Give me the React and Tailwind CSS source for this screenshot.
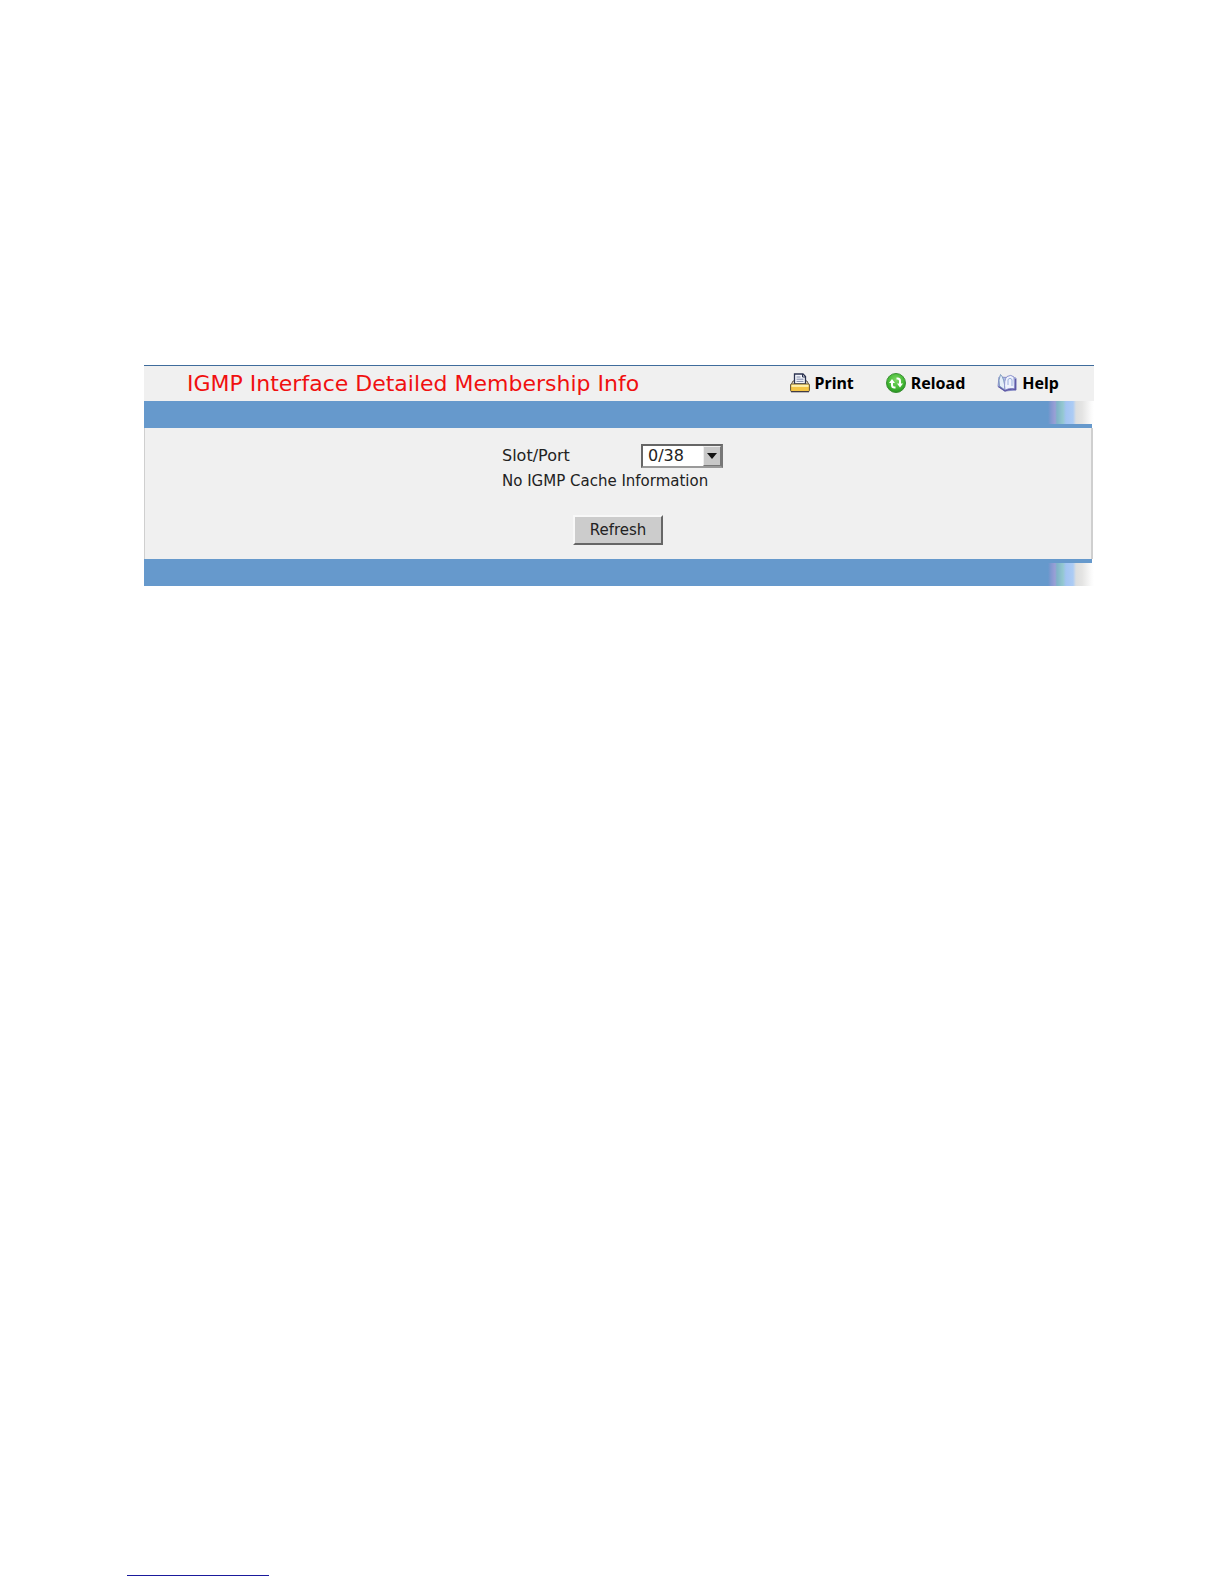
import React from "react";

function PrintIcon() {
  return (
    <svg width="20" height="20" viewBox="0 0 20 20" aria-hidden="true">
      <path d="M3 8L1 12h18l-2-4z" fill="#fff3d4" stroke="#5e5345" />
      <path d="M4.500 1h8.500l2.500 2.500V11h-11z" fill="#f4f6fc" stroke="#2b3350" strokeWidth="1.300" />
      <path d="M12.500 1v3h3" fill="none" stroke="#2b3350" />
      <path d="M6.500 4h4M6.500 6.200h7M6.500 8.400h7" stroke="#7f89a8" />
      <rect x="0.600" y="11" width="18.800" height="7.500" rx="1" fill="#f4c545" stroke="#5e5037" />
      <path d="M1.500 12.800h17" stroke="#fff1ad" strokeWidth="2.200" />
      <path d="M1 18.700h18" stroke="#3f3a48" strokeWidth="1.200" />
    </svg>
  );
}

function ReloadIcon() {
  return (
    <svg width="20" height="20" viewBox="0 0 20 20" aria-hidden="true">
      <defs>
        <radialGradient id="ball" cx="50%" cy="35%" r="70%">
          <stop offset="0" stopColor="#7fd866" />
          <stop offset="0.600" stopColor="#43b934" />
          <stop offset="1" stopColor="#208a1c" />
        </radialGradient>
      </defs>
      <circle cx="10" cy="10" r="9.500" fill="url(#ball)" stroke="#3a8f34" />
      <path d="M9.500 14.500H8.500Q6 14.500 6 12V9" fill="none" stroke="#fff" strokeWidth="2" />
      <path d="M3 10l3-4 3 4z" fill="#fff" />
      <path d="M10.500 5.500h1Q14 5.500 14 8v3" fill="none" stroke="#fff" strokeWidth="2" />
      <path d="M11 10.500h6l-3 4z" fill="#fff" />
    </svg>
  );
}

function HelpIcon() {
  return (
    <svg width="20" height="20" viewBox="0 0 20 20" aria-hidden="true">
      <path d="M2 4L1 13.500l7 4.500 11-1V5z" fill="#aebde6" stroke="#8a8fc8" />
      <path d="M3.500 1.500Q7.500 5 8 17L2.500 13Q1 7 3.500 1.500z" fill="#e4eef8" stroke="#7f9cc0" />
      <path d="M8 17Q6.500 7 10 3.500q4-2.500 7 .5l.5 12Q12 14.500 8 17z" fill="#eef2fd" stroke="#8d93cc" />
      <path d="M11 12V6.500Q13 4 15 6.500V13" fill="none" stroke="#9aaedb" />
      <path d="M1.500 13.500L8 18q5-2.500 10.500-1.500V6" fill="none" stroke="#5f58a4" strokeWidth="1.300" />
    </svg>
  );
}

const actions = [
  { label: "Print", Icon: PrintIcon },
  { label: "Reload", Icon: ReloadIcon },
  { label: "Help", Icon: HelpIcon },
];

function BarCap() {
  return (
    <div className="ml-auto h-full w-[46px] bg-[linear-gradient(to_right,#6699cc_0px,#8298d0_3px,#9a9fd6_7px,#7fb3c8_9px,#94c8d0_15px,#a3c4f2_18px,#acccf5_25px,#dcdedf_28px,#e4e4e3_34px,#fafafa_43px,#ffffff_46px)]" />
  );
}

export default function App() {
  return (
    <div className="flex min-h-screen flex-col bg-white font-['DejaVu_Sans',Verdana,sans-serif] text-[15px] text-[#222]">
      <main className="mt-[365px] mr-[130px] ml-36">
        <header className="flex h-9 items-center border-t border-[#3f6c9c] bg-[#f0f0f0] pr-[35px] pl-[43px]">
          <h1 className="text-[22px] leading-6 whitespace-nowrap text-[#f01010]">IGMP Interface Detailed Membership Info</h1>
          <nav className="ml-auto flex items-center gap-8 pb-0.5 font-['Noto_Sans',sans-serif] text-base font-bold text-black">
            {actions.map(({ label, Icon }) => (
              <a key={label} href="#" className="flex items-center gap-[5px]">
                <Icon />
                {label}
              </a>
            ))}
          </nav>
        </header>
        <div className="h-[23px] bg-[#6699cc]">
          <BarCap />
        </div>
        <div className="mr-0.5 h-1 bg-[#6699cc]" />
        <form
          className="mr-px flex flex-col items-center border-r-2 border-l border-[#cfcfcf] bg-[#f0f0f0] pt-4 pb-3.5"
          onSubmit={(e) => e.preventDefault()}
        >
          <div className="w-[232px]">
            <div className="flex items-center text-base">
              <label htmlFor="port" className="w-[139px]">Slot/Port</label>
              <div className="relative">
                <select
                  id="port"
                  defaultValue="0/38"
                  className="block h-6 w-[82px] appearance-none border-2 border-t-[#666] border-r-[#777] border-b-[#999] border-l-[#666] bg-white pl-[5px] leading-5 outline-none"
                >
                  <option>0/38</option>
                </select>
                <span className="pointer-events-none absolute inset-y-0.5 right-0.5 flex w-[18px] items-center justify-center border border-t-[#eee] border-r-[#777] border-b-[#777] border-l-[#eee] bg-[#c8c8c8]">
                  <svg width="10" height="6" viewBox="0 0 10 6" aria-hidden="true">
                    <path d="M0 0h10L5 6z" fill="#111" />
                  </svg>
                </span>
              </div>
            </div>
            <p className="mt-px leading-6 whitespace-nowrap">No IGMP Cache Information</p>
          </div>
          <button
            type="submit"
            className="mt-[22px] h-[30px] w-[90px] border-2 border-t-[#f8f8f8] border-r-[#666] border-b-[#666] border-l-[#f8f8f8] bg-[#cccccc]"
          >
            Refresh
          </button>
        </form>
        <div className="mr-0.5 h-1 bg-[#6699cc]" />
        <div className="h-[23px] bg-[#6699cc]">
          <BarCap />
        </div>
      </main>
      <footer className="mt-auto mb-2 ml-[127px] w-[142px] border-t border-[#1a1a9c]" />
    </div>
  );
}
